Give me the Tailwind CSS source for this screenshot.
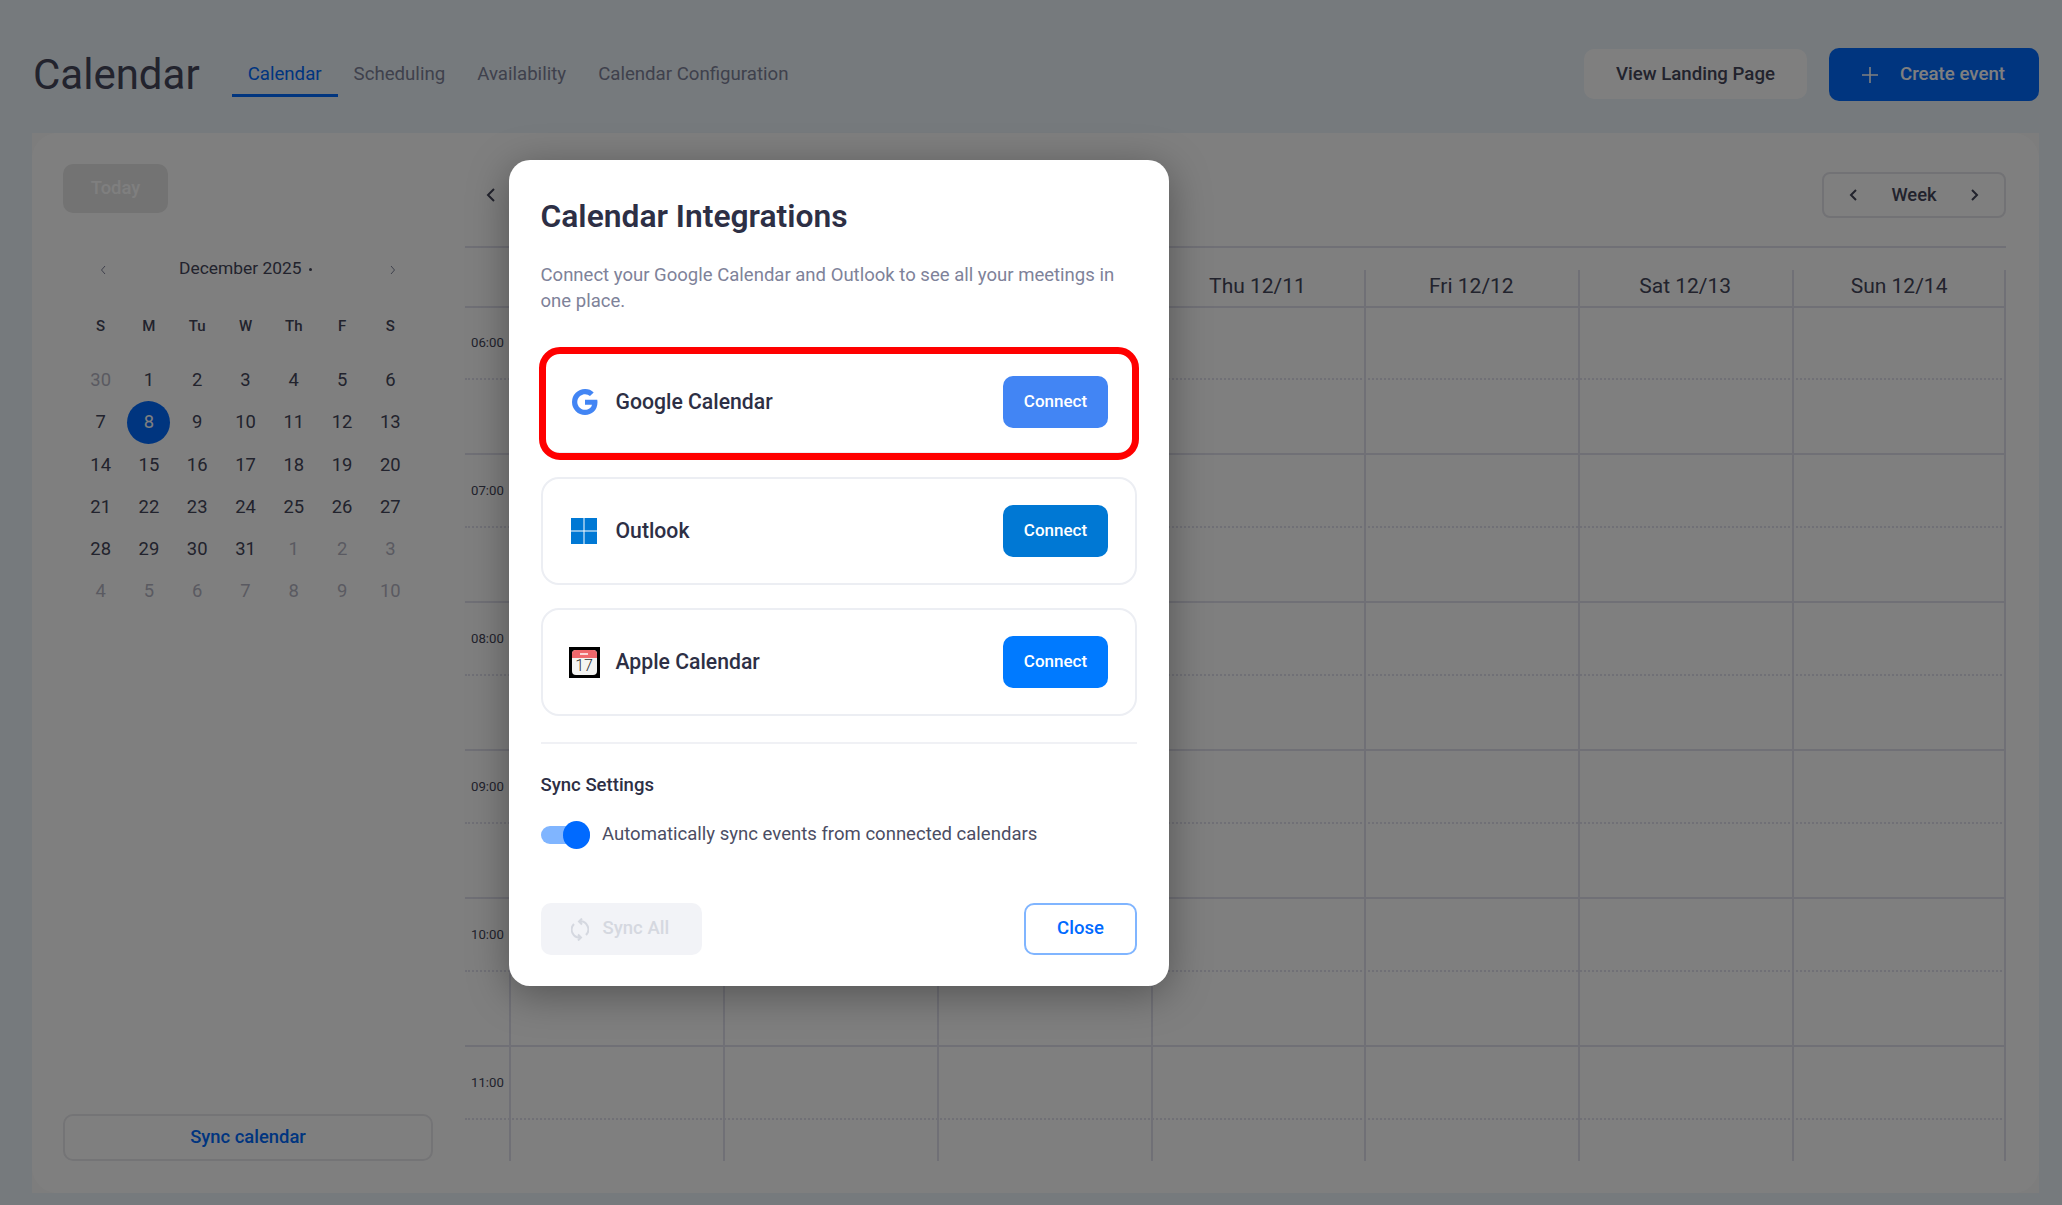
<!doctype html>
<html>
<head>
<meta charset="utf-8">
<title>Calendar</title>
<script src="https://cdn.jsdelivr.net/npm/@tailwindcss/browser@4"></script>
</head>
<body class="font-['Roboto',sans-serif] bg-[#ecf4fa] text-[#44465a] h-[1205px] w-[2062px] overflow-hidden relative">

<!-- page -->
<div class="flex flex-col h-full">
  <header class="h-[133px] flex items-start pl-[33px] pr-[23px] pt-[48px]">
    <h1 class="text-[42px] leading-[54px] text-[#44465a] font-normal">Calendar</h1>
    <nav class="flex ml-[32px] text-[18.65px] text-[#7e8299] h-[49px]">
      <a class="px-[16px] flex items-center pt-[7px] text-[#006aff] border-b-[3px] border-[#006aff]">Calendar</a>
      <a class="px-[16px] flex items-center pt-[4px]">Scheduling</a>
      <a class="px-[16px] flex items-center pt-[4px]">Availability</a>
      <a class="px-[16px] flex items-center pt-[4px]">Calendar Configuration</a>
    </nav>
    <div class="ml-auto flex items-start gap-[22px]">
      <button class="mt-[1px] w-[223px] h-[50px] rounded-[10px] bg-white text-[18.65px] font-medium text-[#44465a] pt-[2px]">View Landing Page</button>
      <button class="w-[210px] h-[53px] rounded-[10px] bg-[#006aff] text-white text-[18.65px] font-medium flex items-center pl-[32px] gap-[21px]">
        <svg class="w-[18px] h-[18px]" viewBox="0 0 18 18" fill="none" stroke="white" stroke-width="1.6"><path d="M9 1v16M1 9h16"/></svg>
        <span class="pt-[1px]">Create event</span>
      </button>
    </div>
  </header>

  <main class="w-[2007px] ml-[32px] h-[1060px] bg-[#fbfbfb]">
  <div class="h-full bg-white rounded-[26px] flex pl-[31px] pr-[33px] pt-[31px] pb-[32px]">
    <!-- left column -->
    <aside class="w-[370px] flex flex-col shrink-0">
      <button class="w-[105px] h-[49px] rounded-[10px] bg-[#e6e6e6] text-white text-[18.4px] font-medium pb-[2px]">Today</button>
      <div class="flex items-center h-[40px] mt-[35px] pl-[37px] pr-[37px] text-[#44465a]">
        <svg class="w-[6px] h-[10px] mt-[3px]" viewBox="0 0 6 10" fill="none" stroke="#7e8299" stroke-width="1"><path d="M5 1 1.5 5 5 9"/></svg>
        <span class="ml-[73px] text-[17.4px]">December 2025</span>
        <span class="ml-[7px] mt-[3px] w-[3px] h-[3px] bg-[#44465a] rounded-full"></span>
        <svg class="ml-auto w-[6px] h-[10px] mt-[3px]" viewBox="0 0 6 10" fill="none" stroke="#7e8299" stroke-width="1"><path d="M1 1l3.5 4L1 9"/></svg>
      </div>
      <div class="grid grid-cols-7 w-[338px] ml-[13.5px] mt-[17px] text-center text-[15px] font-medium h-[42px] items-center">
        <span>S</span><span>M</span><span>Tu</span><span>W</span><span>Th</span><span>F</span><span>S</span>
      </div>
      <div class="grid grid-cols-7 auto-rows-[42.2px] w-[338px] ml-[13.5px] mt-[12px] items-center justify-items-center text-[18.4px]">
        <span class="text-[#b5b5c3]">30</span><span>1</span><span>2</span><span>3</span><span>4</span><span>5</span><span>6</span>
        <span>7</span><span class="w-[43px] h-[43px] rounded-full bg-[#006aff] text-white flex items-center justify-center">8</span><span>9</span><span>10</span><span>11</span><span>12</span><span>13</span>
        <span>14</span><span>15</span><span>16</span><span>17</span><span>18</span><span>19</span><span>20</span>
        <span>21</span><span>22</span><span>23</span><span>24</span><span>25</span><span>26</span><span>27</span>
        <span>28</span><span>29</span><span>30</span><span>31</span><span class="text-[#b5b5c3]">1</span><span class="text-[#b5b5c3]">2</span><span class="text-[#b5b5c3]">3</span>
        <span class="text-[#b5b5c3]">4</span><span class="text-[#b5b5c3]">5</span><span class="text-[#b5b5c3]">6</span><span class="text-[#b5b5c3]">7</span><span class="text-[#b5b5c3]">8</span><span class="text-[#b5b5c3]">9</span><span class="text-[#b5b5c3]">10</span>
      </div>
      <button class="mt-auto h-[47px] w-full rounded-[10px] border-2 border-[#e8e8ec] text-[18.4px] font-medium text-[#006aff] pb-[1px]">Sync calendar</button>
    </aside>

    <!-- right column -->
    <section class="ml-[32px] flex-1 flex flex-col min-w-0">
      <div class="h-[84px] shrink-0 border-b-2 border-[#e0e1ec] flex items-start pt-[8px]">
        <svg class="ml-[21px] mt-[15px] w-[10px] h-[16px]" viewBox="0 0 10 16" fill="none" stroke="#44465a" stroke-width="2"><path d="M8 2 2 8l6 6"/></svg>
        <div class="ml-auto w-[184px] h-[46px] rounded-[8px] border-2 border-[#e4e4ea] flex items-center justify-between px-[25px] text-[18.4px] font-medium">
          <svg class="w-[9px] h-[14px]" viewBox="0 0 9 14" fill="none" stroke="#44465a" stroke-width="2"><path d="M7 2 2 7l5 5"/></svg>
          <span>Week</span>
          <svg class="w-[9px] h-[14px]" viewBox="0 0 9 14" fill="none" stroke="#44465a" stroke-width="2"><path d="m2 2 5 5-5 5"/></svg>
        </div>
      </div>

      <div class="mt-[22px] h-[38px] shrink-0 pl-[44px] border-b-2 border-[#e0e1ec] grid grid-cols-7 text-[21px] text-center leading-[32px]">
        <div class="border-l-2 border-[#e0e1ec]"></div>
        <div class="border-l-2 border-[#e0e1ec]"></div>
        <div class="border-l-2 border-[#e0e1ec]"></div>
        <div class="border-l-2 border-[#e0e1ec] pr-[2px]">Thu 12/11</div>
        <div class="border-l-2 border-[#e0e1ec] pr-[2px]">Fri 12/12</div>
        <div class="border-l-2 border-[#e0e1ec] pr-[2px]">Sat 12/13</div>
        <div class="border-l-2 border-r-2 border-[#e0e1ec]">Sun 12/14</div>
      </div>

      <div class="relative flex-1 overflow-hidden">
        <div class="h-[147px] border-b-2 border-[#e0e1ec]"><div class="h-[72px] border-b-2 border-dotted border-[#e0e1ec] pl-[6px] text-[13.2px] leading-[70px]">06:00</div></div>
        <div class="h-[148px] border-b-2 border-[#e0e1ec]"><div class="h-[73px] border-b-2 border-dotted border-[#e0e1ec] pl-[6px] text-[13.2px] leading-[72px]">07:00</div></div>
        <div class="h-[148px] border-b-2 border-[#e0e1ec]"><div class="h-[73px] border-b-2 border-dotted border-[#e0e1ec] pl-[6px] text-[13.2px] leading-[72px]">08:00</div></div>
        <div class="h-[148px] border-b-2 border-[#e0e1ec]"><div class="h-[73px] border-b-2 border-dotted border-[#e0e1ec] pl-[6px] text-[13.2px] leading-[72px]">09:00</div></div>
        <div class="h-[148px] border-b-2 border-[#e0e1ec]"><div class="h-[73px] border-b-2 border-dotted border-[#e0e1ec] pl-[6px] text-[13.2px] leading-[72px]">10:00</div></div>
        <div class="h-[148px] border-b-2 border-[#e0e1ec]"><div class="h-[73px] border-b-2 border-dotted border-[#e0e1ec] pl-[6px] text-[13.2px] leading-[72px]">11:00</div></div>
        <div class="absolute inset-0 pl-[44px] grid grid-cols-7">
          <div class="border-l-2 border-[#e0e1ec]"></div>
          <div class="border-l-2 border-[#e0e1ec]"></div>
          <div class="border-l-2 border-[#e0e1ec]"></div>
          <div class="border-l-2 border-[#e0e1ec]"></div>
          <div class="border-l-2 border-[#e0e1ec]"></div>
          <div class="border-l-2 border-[#e0e1ec]"></div>
          <div class="border-l-2 border-r-2 border-[#e0e1ec]"></div>
        </div>
      </div>
    </section>
  </div>
  </main>
</div>

<!-- overlay + modal -->
<div class="absolute inset-0 bg-black/50 flex items-start">
  <div class="mt-[160px] ml-[509px] w-[660px] h-[826px] bg-white rounded-[21px] pl-[31.5px] pr-[32px] pt-[37px] shadow-[0_8px_40px_rgba(0,0,0,0.35)] flex flex-col">
    <h2 class="text-[31.8px] leading-[38px] font-semibold text-[#2d2f45]">Calendar Integrations</h2>
    <p class="mt-[27px] text-[18.55px] leading-[26px] text-[#7e8299]">Connect your Google Calendar and Outlook to see all your meetings in one place.</p>

    <div class="mt-[36px] flex flex-col gap-[23px]">
      <div class="relative h-[104px] rounded-[18px] border-2 border-[#eceef3] flex items-center pl-[28px] pr-[27px]">
        <span class="absolute -inset-x-[4px] -top-[5px] -bottom-[8px] rounded-[21px] border-[7px] border-[#ff0000]"></span>
        <svg class="w-[26px] h-[26px] ml-[1px]" viewBox="0 0 16 16" fill="#4285f4"><path d="M15.545 6.558a9.42 9.42 0 0 1 .139 1.626c0 2.434-.87 4.492-2.384 5.885h.002C11.978 15.292 10.158 16 8 16A8 8 0 1 1 8 0a7.689 7.689 0 0 1 5.352 2.082l-2.284 2.284A4.347 4.347 0 0 0 8 3.166c-2.087 0-3.86 1.408-4.492 3.304a4.792 4.792 0 0 0 0 3.063h.003c.635 1.893 2.405 3.301 4.492 3.301 1.078 0 2.004-.276 2.722-.764h-.003a3.702 3.702 0 0 0 1.599-2.431H8v-3.08h7.545z"/></svg>
        <span class="ml-[18px] text-[21.2px] font-medium text-[#2d2f45]">Google Calendar</span>
        <button class="ml-auto w-[105px] h-[52px] rounded-[10px] bg-[#4285f4] text-white text-[17px] font-medium">Connect</button>
      </div>

      <div class="h-[108px] rounded-[18px] border-2 border-[#eceef3] flex items-center pl-[28px] pr-[27px]">
        <svg class="w-[26px] h-[26px]" viewBox="0 0 26 26" fill="#0078d4"><rect width="12.5" height="12.5"/><rect x="13.5" width="12.5" height="12.5"/><rect y="13.5" width="12.5" height="12.5"/><rect x="13.5" y="13.5" width="12.5" height="12.5"/></svg>
        <span class="ml-[19px] text-[21.2px] font-medium text-[#2d2f45]">Outlook</span>
        <button class="ml-auto w-[105px] h-[52px] rounded-[10px] bg-[#0078d4] text-white text-[17px] font-medium">Connect</button>
      </div>

      <div class="h-[108px] rounded-[18px] border-2 border-[#eceef3] flex items-center pl-[26px] pr-[27px]">
        <div class="w-[31px] h-[31px] bg-black p-[3px]">
          <div class="w-full h-full rounded-[4px] bg-[#f4f4f2] overflow-hidden flex flex-col">
            <div class="h-[8px] bg-[#f0686c] flex items-center justify-center"><span class="w-[8px] h-[2px] bg-[#fbd5d5]"></span></div>
            <div class="flex-1 flex items-center justify-center text-[16px] leading-none text-[#333] font-light">17</div>
          </div>
        </div>
        <span class="ml-[16px] text-[21.2px] font-medium text-[#2d2f45]">Apple Calendar</span>
        <button class="ml-auto w-[105px] h-[52px] rounded-[10px] bg-[#007aff] text-white text-[17px] font-medium">Connect</button>
      </div>
    </div>

    <div class="mt-[26px] border-t-2 border-[#f0f1f5]"></div>
    <h3 class="mt-[29px] text-[18.55px] leading-[24px] font-medium text-[#2d2f45]">Sync Settings</h3>
    <div class="mt-[24px] flex items-center h-[28px]">
      <span class="relative w-[49px] h-[18px] rounded-full bg-[#80b5ff] shrink-0">
        <span class="absolute right-0 -top-[5px] w-[27px] h-[28px] rounded-full bg-[#006aff]"></span>
      </span>
      <span class="ml-[12.5px] text-[18.55px] text-[#4b4d63]">Automatically sync events from connected calendars</span>
    </div>

    <div class="mt-[54px] flex justify-between">
      <button class="w-[161px] h-[52px] rounded-[10px] bg-[#f2f3f7] text-[#d5d8e0] text-[18.55px] font-medium flex items-center pl-[30px] gap-[14px]">
        <svg class="w-[18px] h-[23px]" viewBox="0 0 18 22" fill="none" stroke="#d5d8e0" stroke-width="2"><path d="M8 3a8 8 0 0 1 7 13.5M11 0 8 3l3 3M10 19a8 8 0 0 1-7-13.5M7 16l3 3-3 3"/></svg>
        <span>Sync All</span>
      </button>
      <button class="w-[113px] h-[52px] rounded-[10px] border-2 border-[#80b5ff] text-[#006aff] text-[18.55px] font-medium">Close</button>
    </div>
  </div>
</div>
</body>
</html>
